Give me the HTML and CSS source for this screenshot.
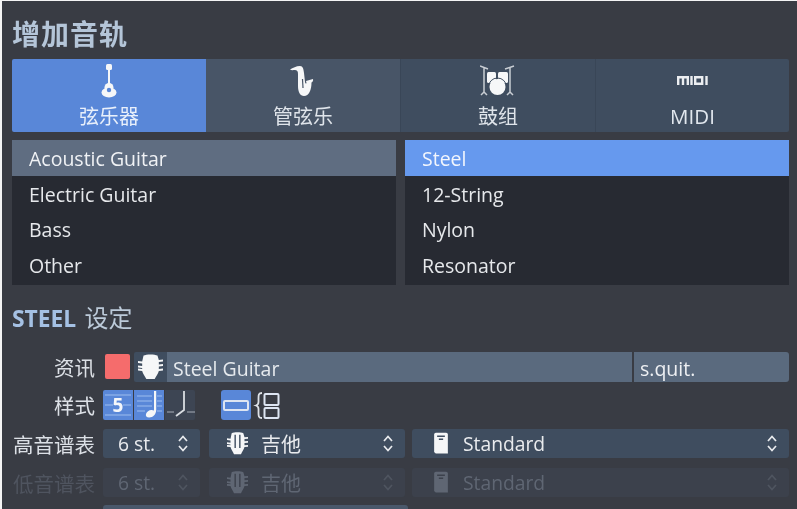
FILE: index.html
```html
<!DOCTYPE html>
<html lang="zh">
<head>
<meta charset="utf-8">
<title>增加音轨</title>
<link rel="stylesheet" href="styles.css">
</head>
<body>
<main class="panel">
  <h1 class="title">增加音轨</h1>
  <div class="tabs">
    <div class="tab active">
      <svg class="tab-icon guitar" viewBox="0 0 16 34"><rect class="fill" x="5" y="0" width="6" height="6" rx="1.500"/><rect class="fill" x="7" y="5" width="2" height="16"/><circle class="fill" cx="8" cy="23.500" r="4.500"/><ellipse class="fill" cx="8" cy="28.500" rx="7.500" ry="5"/><circle cx="8" cy="26" r="2.200" fill="#5987d8"/></svg>
      <span>弦乐器</span>
    </div>
    <div class="tab second">
      <svg class="tab-icon sax" viewBox="0 0 26 32"><path class="fill" d="M0 3.500C3 2 6 0 10 0c3 0 3.500 3 4 7l1 9c.2 1.500 1 2 1.500 1L16 15l7-2c.5 2-.5 3-1.500 3.500C21.500 24 19 30 14 30c-4 0-6-4-6-10V8c0-3-1-4-3-4-2 0-3.500.5-5-.5z"/><path class="sax-slit" d="M12.500 13l.5 9"/></svg>
      <span>管弦乐</span>
    </div>
    <div class="tab">
      <svg class="tab-icon drums" viewBox="0 0 36 31"><path class="line" d="M0 1l8 3M34 1l-9 3M4 3v25M30 3v25M1 30l3-3 3 3M27 30l3-3 3 3"/><rect class="fill" x="7" y="7" width="9" height="11" rx="1.500"/><rect class="fill" x="18" y="7" width="10" height="11" rx="1.500"/><circle class="ring" cx="17.500" cy="22" r="9"/><circle class="fill" cx="17.500" cy="22" r="8"/></svg>
      <span>鼓组</span>
    </div>
    <div class="tab">
      <svg class="tab-icon midi" viewBox="0 0 31 9"><path class="midi-line" d="M1.200 9V1.200h9.600V9M6 1.200V9M14.500 0v9M18.200 1.200h7v6.600h-7zM29.500 0v9"/></svg>
      <span class="latin-tab">MIDI</span>
    </div>
  </div>

  <div class="lists">
    <ul class="list">
      <li class="row soft">Acoustic Guitar</li>
      <li class="row">Electric Guitar</li>
      <li class="row">Bass</li>
      <li class="row">Other</li>
    </ul>
    <ul class="list">
      <li class="row bright">Steel</li>
      <li class="row">12-String</li>
      <li class="row">Nylon</li>
      <li class="row">Resonator</li>
    </ul>
  </div>

  <h2 class="section"><b>STEEL</b> 设定</h2>

  <div class="form">
    <div class="form-row">
      <label class="label">资讯</label>
      <div class="info">
        <span class="swatch"></span>
        <span class="head-btn">
          <svg class="head-icon" viewBox="2 1 18 27" preserveAspectRatio="none"><path class="fill" d="M6 2.500C8 1 14 1 16 2.500l1 4.500 3-.5v2l-3 .5v2.500l3-.5v2l-3 .5v2.500l3-.5v2l-3 .5c-.5 3-2 5-3 8h-6c-1-3-2.500-5-3-8l-3-.5v-2l3 .5V15l-3-.5v-2l3 .5v-2.500l-3-.5v-2l3 .5z"/></svg>
        </span>
        <span class="field name">Steel Guitar</span>
        <span class="field short">s.quit.</span>
      </div>
    </div>

    <div class="form-row style-row">
      <label class="label">样式</label>
      <div class="style-group">
        <span class="tool on first">
          <svg class="tool-icon" viewBox="0 0 30 30"><path class="staff" d="M2 5h26M2 15h8M20 15h8M2 25h26"/></svg>
          <span class="five">5</span>
        </span>
        <span class="tool on">
          <svg class="tool-icon" viewBox="0 0 30 30"><path class="staff" d="M3 6h15M3 11h15M3 16h15M3 21h8M23 6h5M23 11h5M23 16h5M23 21h5"/><path class="fill" d="M20 1h2.200v19c0 4-3 7.500-7 7.500-2.700 0-3.800-1.700-3.200-3.600.6-2.100 3.300-4.200 5.700-4 .9 0 1.600.2 2.300.6z"/></svg>
        </span>
        <span class="tool off last">
          <svg class="tool-icon" viewBox="0 0 30 30"><path class="staff dim" d="M2 22h7M22 22h9"/><path class="stem" d="M19 1v19l-8 6"/></svg>
        </span>
      </div>
      <div class="layout-group">
        <span class="tool on solo">
          <svg class="tool-icon" viewBox="0 0 30 30"><rect class="outline" x="3" y="11" width="24" height="9" rx="1"/></svg>
        </span>
        <span class="tool plain">
          <svg class="tool-icon" viewBox="0 0 30 30"><path class="brace" d="M10 3C6.500 3 6.500 5 6.500 8v4c0 2-1 3-2.500 3.500 1.500.5 2.500 1.500 2.500 3.500v4c0 3 0 5 3.500 5"/><rect class="outline" x="12.500" y="4" width="14" height="11" rx="1"/><rect class="outline" x="12.500" y="18" width="14" height="10" rx="1"/></svg>
        </span>
      </div>
    </div>

    <div class="form-row select-row">
      <label class="label">高音谱表</label>
      <div class="selects">
        <span class="select count"><span class="val">6 st.</span>
          <svg class="updown" viewBox="0 0 10 17"><path d="M1 6l4-4.500L9 6M1 11l4 4.500L9 11"/></svg></span>
        <span class="select instrument"><svg class="sel-icon" viewBox="2 1 18 27" preserveAspectRatio="none"><path class="fill" d="M6 2.500C8 1 14 1 16 2.500l1 4.500 3-.5v2l-3 .5v2.500l3-.5v2l-3 .5v2.500l3-.5v2l-3 .5c-.5 3-2 5-3 8h-6c-1-3-2.500-5-3-8l-3-.5v-2l3 .5V15l-3-.5v-2l3 .5v-2.500l-3-.5v-2l3 .5z"/><path class="groove" d="M9 4v15M13 4v15"/></svg><span class="val cjk">吉他</span>
          <svg class="updown" viewBox="0 0 10 17"><path d="M1 6l4-4.500L9 6M1 11l4 4.500L9 11"/></svg></span>
        <span class="select tuning"><svg class="sel-icon book" viewBox="3 1 16 28"><path class="fill" d="M3 4q0-2 2-2h12q2 0 2 2v22H5q-2 0-2-2z"/><path class="groove wide" d="M6.500 6h9M8.500 9.500h5"/><path class="spine" d="M3.500 25q0 3 2.500 3h13"/></svg><span class="val">Standard</span>
          <svg class="updown" viewBox="0 0 10 17"><path d="M1 6l4-4.500L9 6M1 11l4 4.500L9 11"/></svg></span>
      </div>
    </div>

    <div class="form-row select-row disabled">
      <label class="label">低音谱表</label>
      <div class="selects">
        <span class="select count"><span class="val">6 st.</span>
          <svg class="updown" viewBox="0 0 10 17"><path d="M1 6l4-4.500L9 6M1 11l4 4.500L9 11"/></svg></span>
        <span class="select instrument"><svg class="sel-icon" viewBox="2 1 18 27" preserveAspectRatio="none"><path class="fill" d="M6 2.500C8 1 14 1 16 2.500l1 4.500 3-.5v2l-3 .5v2.500l3-.5v2l-3 .5v2.500l3-.5v2l-3 .5c-.5 3-2 5-3 8h-6c-1-3-2.500-5-3-8l-3-.5v-2l3 .5V15l-3-.5v-2l3 .5v-2.500l-3-.5v-2l3 .5z"/><path class="groove" d="M9 4v15M13 4v15"/></svg><span class="val cjk">吉他</span>
          <svg class="updown" viewBox="0 0 10 17"><path d="M1 6l4-4.500L9 6M1 11l4 4.500L9 11"/></svg></span>
        <span class="select tuning"><svg class="sel-icon book" viewBox="3 1 16 28"><path class="fill" d="M3 4q0-2 2-2h12q2 0 2 2v22H5q-2 0-2-2z"/><path class="groove wide" d="M6.500 6h9M8.500 9.500h5"/><path class="spine" d="M3.500 25q0 3 2.500 3h13"/></svg><span class="val">Standard</span>
          <svg class="updown" viewBox="0 0 10 17"><path d="M1 6l4-4.500L9 6M1 11l4 4.500L9 11"/></svg></span>
      </div>
    </div>

    <div class="form-row cut-row">
      <span class="label"></span>
      <span class="cut-bar"></span>
    </div>
  </div>
</main>
</body>
</html>
```

FILE: styles.css
```css
* { box-sizing: border-box; }

html, body {
  margin: 0;
  height: 100%;
  overflow: hidden;
  background: #f4f4f5;
}

body {
  padding: 1px 0 0 2px;
  font-family: "Open Sans", "Noto Sans CJK SC", sans-serif;
  color: #e8eaee;
}

.panel {
  height: 508px;
  overflow: hidden;
  padding: 0 8px 0 10px;
  background: #393c44;
  filter: blur(0.5px);
}

.title {
  margin: 0;
  height: 58px;
  padding-top: 14px;
  font: 700 28px/36px "Noto Sans CJK SC", sans-serif;
  letter-spacing: 1px;
  color: #b4c5d8;
}

.tabs {
  display: grid;
  grid-template-columns: 194px 194px 195px 194px;
  height: 73px;
}

.tab {
  display: flex;
  flex-direction: column;
  align-items: center;
  padding-top: 5px;
  background: #3f4d5f;
  border-left: 1px solid #394657;
  color: #dfe4ea;
  font: 400 20px/28px "Noto Sans CJK SC", sans-serif;
}

.tab:first-child { border-left: 0; }
.tab:last-child { border-radius: 0 2px 2px 0; }
.tab.second { background: #485567; border-left: 0; }
.tab.active { background: #5987d8; color: #e9f0fb; border-radius: 2px 0 0 2px; }

.tab-icon { display: block; }
.tab-icon.guitar { width: 16px; height: 34px; margin-bottom: 4px; }
.tab-icon.sax { width: 26px; height: 32px; margin: 2px 0 4px; }
.tab-icon.drums { width: 36px; height: 31px; margin: 1px 0 6px; }
.tab-icon.midi { width: 31px; height: 9px; margin: 12px 0 17px; }
.latin-tab { font-family: "Open Sans", sans-serif; font-size: 20.500px; color: #e1e7ee; }

.fill { fill: #f6f7f8; }
.sax-slit { fill: none; stroke: #485567; stroke-width: 1.200; }
.line { fill: none; stroke: #c9ced4; stroke-width: 1.500; }
.ring { fill: none; stroke: #3f4d5f; stroke-width: 1; }
.midi-line { fill: none; stroke: #eceef1; stroke-width: 2.400; }

.lists {
  display: grid;
  grid-template-columns: 384px 384px;
  gap: 9px;
  margin-top: 8px;
}

.list {
  margin: 0;
  padding: 0 0 1.800px;
  list-style: none;
  background: #272a32;
}

.row {
  height: 36px;
  padding-left: 17px;
  font-size: 19.500px;
  line-height: 37px;
  color: #e6e8eb;
}

.row:nth-child(3) { margin-top: -0.800px; }

.row.soft { background: #5f6d81; color: #f0f2f5; }
.row.bright { background: #6699ee; color: #f2f6fd; }

.section {
  margin: 0;
  height: 67px;
  padding-top: 16px;
  font: 400 24px/32px "Noto Sans CJK SC", sans-serif;
  letter-spacing: 0;
  color: #bccad9;
}

.section b {
  margin-right: 3px;
  font: 700 22.800px/32px "Open Sans", sans-serif;
  color: #a5c1e4;
}

.form { display: flex; flex-direction: column; }

.form-row {
  display: flex;
  align-items: center;
  height: 30px;
}

.label {
  flex: 0 0 83px;
  margin-right: 8px;
  text-align: right;
  font: 400 20.500px/28px "Noto Sans CJK SC", sans-serif;
  color: #dce0e6;
  white-space: nowrap;
}

.info { flex: 1; display: flex; height: 30px; }

.swatch {
  flex: 0 0 25px;
  height: 25px;
  margin: 2px 4px 0 2px;
  background: #f56c6c;
  border-radius: 2px;
}

.head-btn {
  flex: 0 0 33px;
  background: #3f4d5f;
  border-radius: 2px 0 0 2px;
  display: flex;
  justify-content: center;
  align-items: center;
}

.head-icon { width: 25px; height: 27px; }

.field {
  display: block;
  background: #5a6a7e;
  font-size: 19.500px;
  line-height: 34px;
  color: #e6eaee;
  padding-left: 6px;
}

.field.name { flex: 1; margin-right: 2px; }
.field.short { flex: 0 0 155px; border-radius: 0 3px 3px 0; color: #eef0f3; }

.style-row { margin-top: 8px; }

.style-group, .layout-group { display: flex; gap: 1px; }
.layout-group { margin-left: 26px; }

.tool {
  position: relative;
  display: flex;
  width: 30px;
  height: 30px;
  background: #3f4d5f;
}

.tool.on { background: #5987d8; }
.tool.first { border-radius: 2px 0 0 2px; }
.tool.last { border-radius: 0 2px 2px 0; }
.tool.solo { border-radius: 3px; }
.tool.plain { background: transparent; }
.tool.off { background: #3d4553; }

.tool-icon { width: 30px; height: 30px; }
.staff { fill: none; stroke: #9dbdee; stroke-width: 1.200; }
.staff.dim { stroke: #a8aeb8; }
.stem { fill: none; stroke: #d9dde2; stroke-width: 1.800; }
.outline { fill: none; stroke: #dde5f2; stroke-width: 2; }
.brace { fill: none; stroke: #dfe3e8; stroke-width: 1.800; }

.five {
  position: absolute;
  inset: 0;
  text-align: center;
  font: 700 19px/30px "Open Sans", sans-serif;
  color: #f4f6fa;
}

.select-row { margin-top: 9px; height: 29px; }
.select-row + .select-row { margin-top: 10px; }

.selects {
  flex: 1;
  display: grid;
  grid-template-columns: 97px 195px 1fr;
  gap: 9px;
}

.select {
  display: flex;
  align-items: center;
  height: 29px;
  padding: 0 12px 0 15px;
  background: #3f4d5f;
  border-radius: 3px;
  font-size: 19.300px;
  color: #e9ebee;
}

.select.instrument { padding-left: 18px; margin-right: -1px; }
.select.tuning { padding-left: 20px; margin-left: -1px; }

.sel-icon { flex: none; width: 21px; height: 24px; margin-right: 13px; }
.sel-icon.book { width: 18px; }
.groove { fill: none; stroke: #3f4d5f; stroke-width: 1.200; }
.groove.wide { stroke-width: 1.800; }
.spine { fill: none; stroke: #3f4d5f; stroke-width: 1; }
.val { flex: 1; white-space: nowrap; }
.val.cjk { font: 400 20px/28px "Noto Sans CJK SC", sans-serif; }

.updown { flex: none; width: 10px; height: 17px; }
.updown path { fill: none; stroke: #e9ebee; stroke-width: 1.700; }

.disabled .select { background: #3c414c; color: #5f6673; }
.disabled .label { color: #4f545f; }
.disabled .fill { fill: #5f6673; }
.disabled .groove, .disabled .spine { stroke: #3c414c; }
.disabled .updown path { stroke: #4f5560; }

.cut-row { margin-top: 8px; }

.cut-bar {
  flex: 0 0 305px;
  height: 30px;
  background: #4a586b;
  border-radius: 3px 3px 0 0;
}
```
